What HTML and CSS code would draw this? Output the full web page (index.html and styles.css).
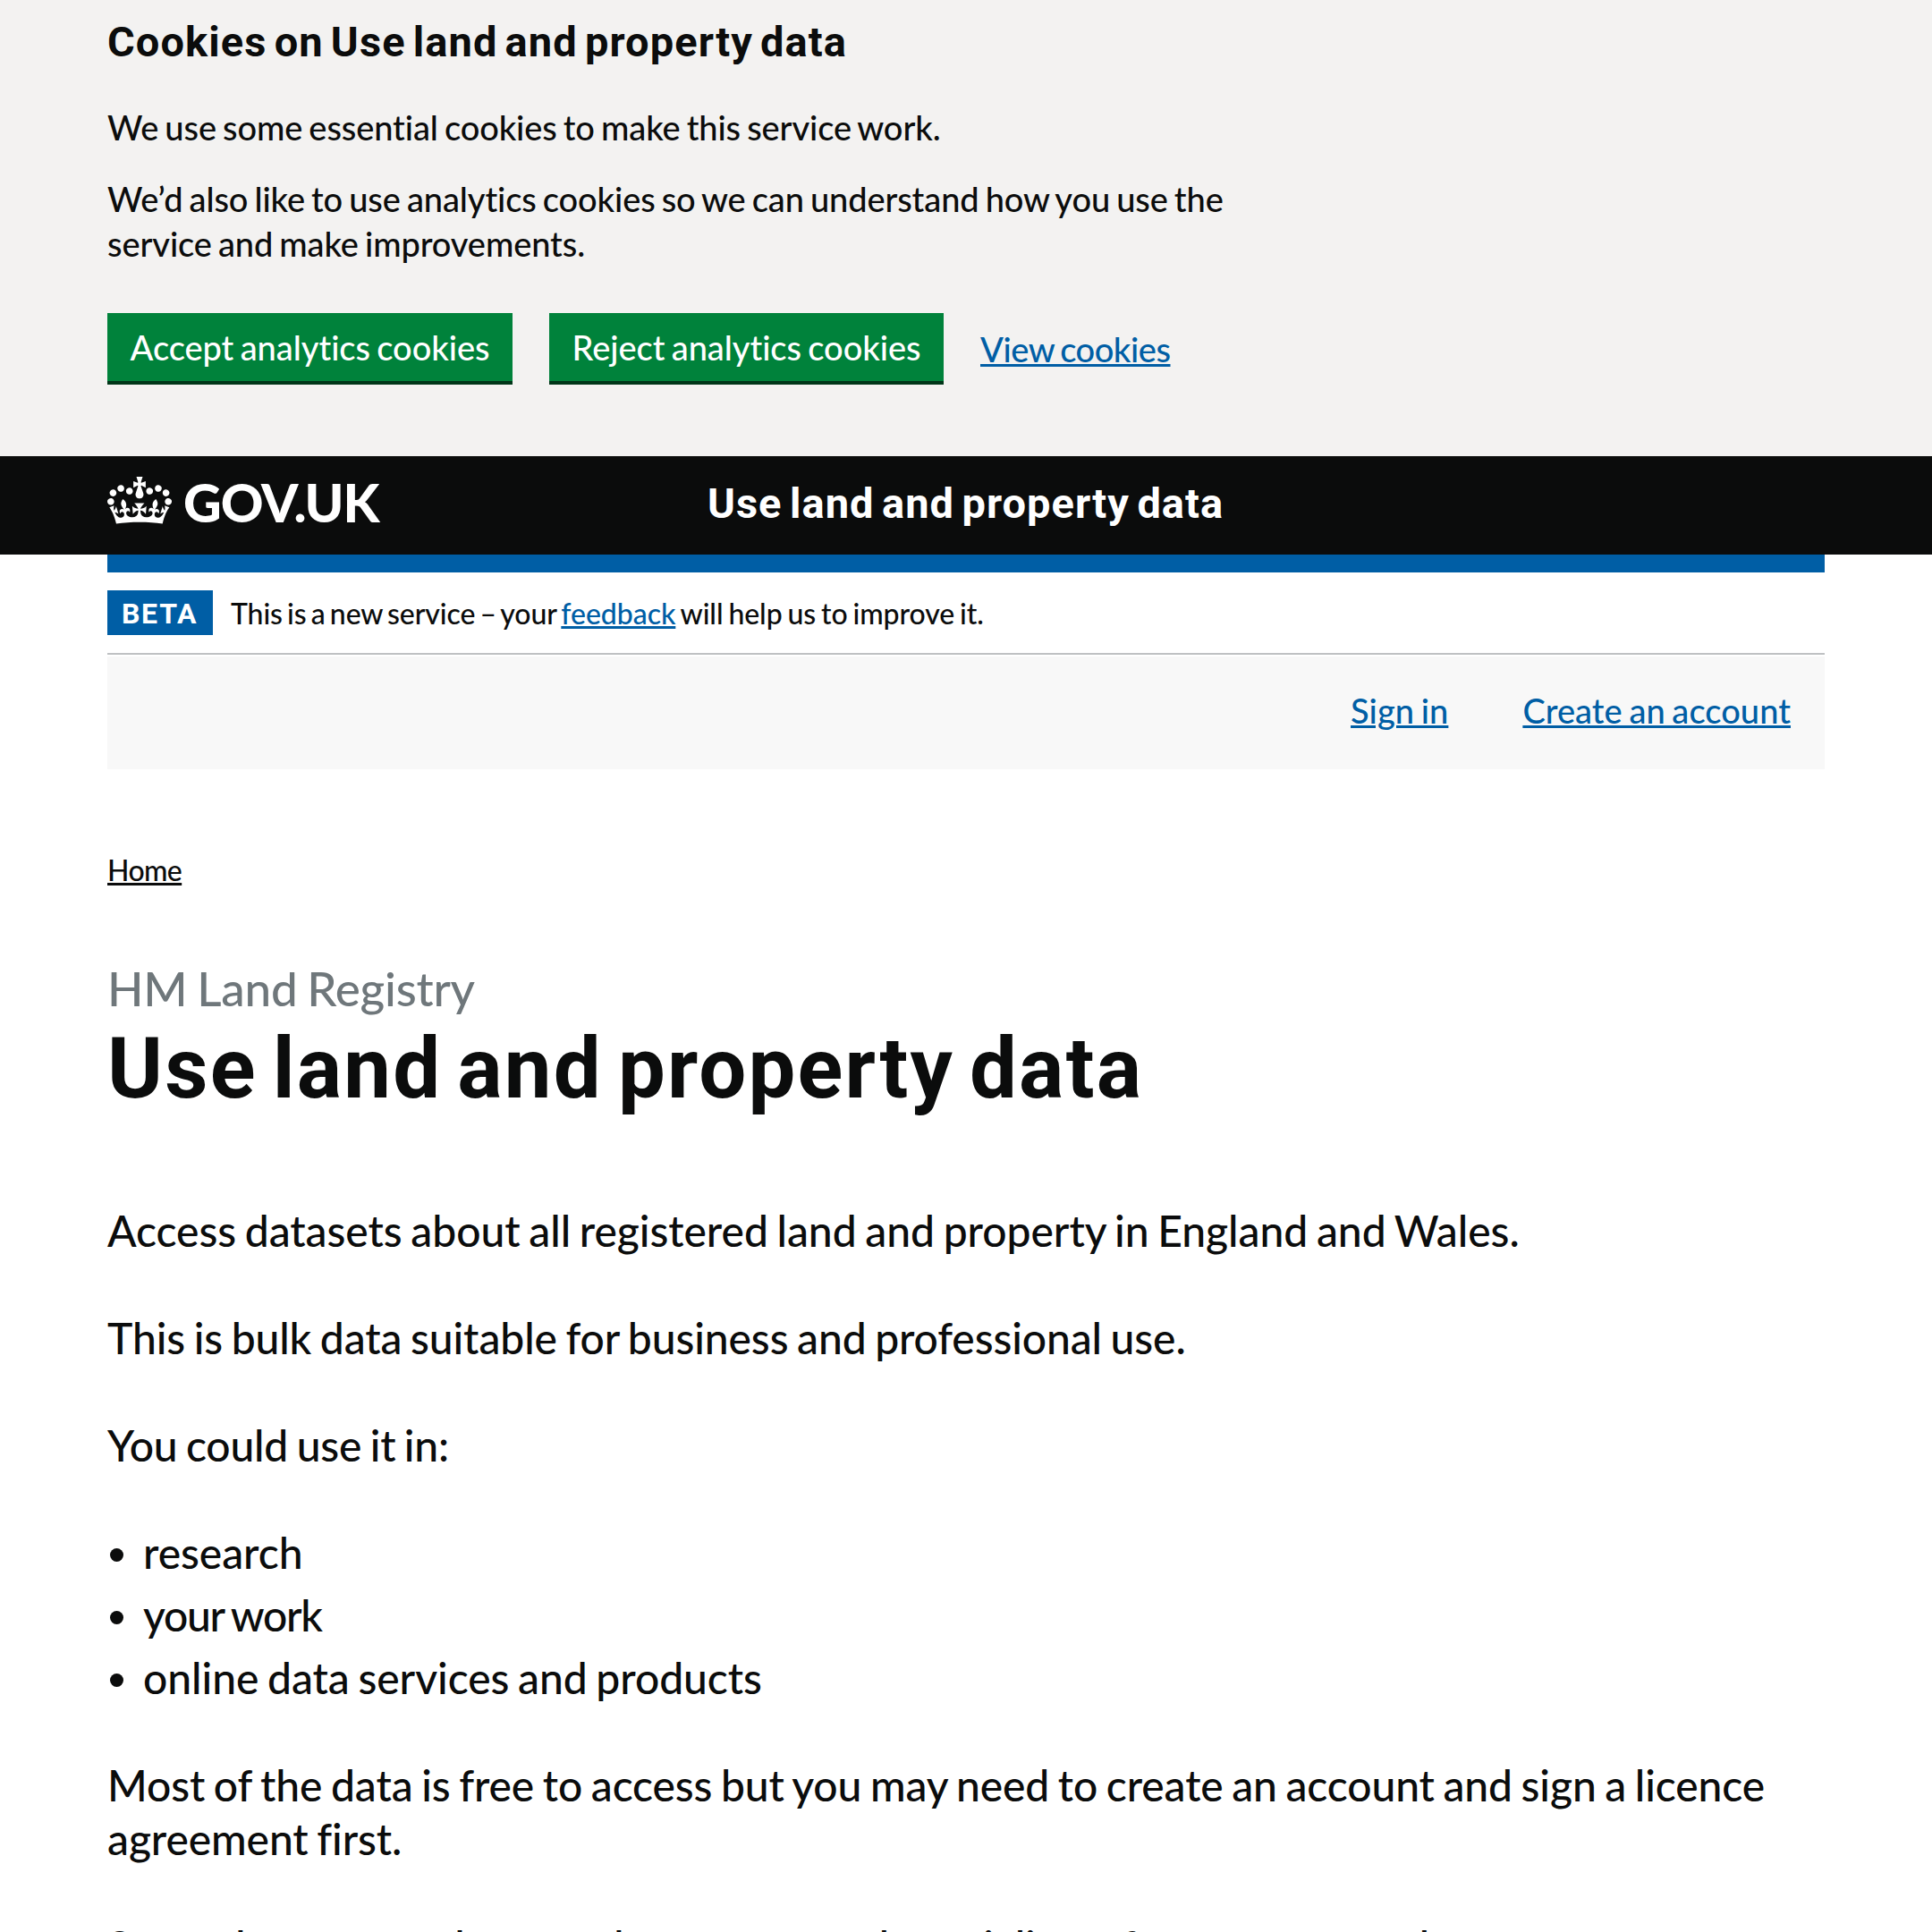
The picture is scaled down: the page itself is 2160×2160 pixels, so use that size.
FILE: index.html
```html
<!DOCTYPE html>
<html lang="en">
<head>
<meta charset="utf-8">
<title>Use land and property data</title>
<link rel="stylesheet" href="styles.css">
</head>
<body>
<section class="cookies" aria-label="Cookies on Use land and property data">
  <div class="container">
    <h2 class="cookies-title">Cookies on Use land and property data</h2>
    <div class="cookies-text">
      <p>We use some essential cookies to make this service work.</p>
      <p>We’d also like to use analytics cookies so we can understand how you use the<br>service and make improvements.</p>
    </div>
    <div class="cookies-actions">
      <button class="button button-accept">Accept analytics cookies</button>
      <button class="button button-reject">Reject analytics cookies</button>
      <a class="link link-view" href="#">View cookies</a>
    </div>
  </div>
</section>
<header class="header">
  <div class="container header-row">
    <a class="logo" href="#">
      <svg class="crown" viewBox="0 0 132 97" width="72" height="53" fill="currentColor" aria-hidden="true"><path fill-rule="evenodd" d="M25 30.2c3.5 1.5 7.7-.2 9.1-3.7 1.5-3.6-.2-7.8-3.9-9.2-3.6-1.4-7.6.3-9.1 3.9-1.4 3.5.3 7.5 3.9 9zM9 39.5c3.6 1.5 7.8-.2 9.2-3.7 1.5-3.6-.2-7.8-3.9-9.1-3.6-1.5-7.6.2-9.1 3.8-1.4 3.5.3 7.5 3.8 9zM4.4 57.2c3.5 1.5 7.7-.2 9.1-3.8 1.5-3.6-.2-7.7-3.9-9.1-3.5-1.5-7.6.3-9.1 3.8-1.4 3.5.3 7.6 3.9 9.1zm38.3-21.4c3.5 1.5 7.7-.2 9.1-3.8 1.5-3.6-.2-7.7-3.9-9.1-3.6-1.5-7.6.3-9.1 3.8-1.3 3.6.4 7.7 3.9 9.1zm64.4-5.6c-3.6 1.5-7.8-.2-9.1-3.7-1.5-3.6.2-7.8 3.8-9.2 3.6-1.4 7.7.3 9.2 3.9 1.3 3.5-.4 7.5-3.9 9zm15.9 9.3c-3.6 1.5-7.7-.2-9.1-3.7-1.5-3.6.2-7.8 3.7-9.1 3.6-1.5 7.7.2 9.2 3.8 1.5 3.5-.3 7.5-3.8 9zm4.7 17.7c-3.6 1.5-7.8-.2-9.2-3.8-1.5-3.6.2-7.7 3.9-9.1 3.6-1.5 7.7.3 9.2 3.8 1.3 3.5-.4 7.6-3.9 9.1zM89.3 35.8c-3.6 1.5-7.8-.2-9.2-3.8-1.4-3.6.2-7.7 3.9-9.1 3.6-1.5 7.7.3 9.2 3.8 1.4 3.6-.3 7.7-3.9 9.1zM69.7 17.7l8.9 4.7V9.3l-8.9 2.8c-.2-.3-.5-.6-.9-.9L72.4 0H59.6l3.5 11.2c-.3.3-.6.5-.9.9l-8.8-2.8v13.1l8.8-4.7c.3.3.6.7.9.9l-5 15.4v.1c-.2.8-.4 1.6-.4 2.4 0 4.1 3.1 7.5 7 8.1h.2c.3 0 .7.1 1 .1.4 0 .7 0 1-.1h.2c4-.6 7.1-4.1 7.1-8.1 0-.8-.1-1.7-.4-2.4V34l-5.1-15.4c.4-.2.7-.6 1-.9zM66 92.8c16.9 0 32.8 1.1 47.1 3.2 4-16.9 8.9-26.7 14-33.5l-9.6-3.4c1 4.9 1.1 7.2 0 10.2-1.5-1.4-3-4.3-4.2-8.7L108.6 76c2.8-2 5-3.2 7.5-3.3-4.4 9.4-10 11.9-13.6 11.2-4.3-.8-6.3-4.6-5.6-7.9 1-4.7 5.7-5.9 8-.5 4.3-8.7-3-11.4-7.6-8.8 7.1-7.2 7.9-13.5 2.1-21.1-8 6.1-8.1 12.3-4.5 20.8-4.7-5.4-12.1-2.5-9.5 6.2 3.4-5.2 7.9-2 7.2 3.1-.6 4.3-6.4 7.8-13.5 7.2-10.3-.9-10.9-8-11.2-13.8 2.5-.5 7.1 1.8 11 7.3L80.2 60c-4.1 4.4-8 5.3-12.3 5.4 1.4-4.4 8-11.6 8-11.6H55.5s6.4 7.2 7.9 11.6c-4.2-.1-8-1-12.3-5.4l1.4 16.4c3.9-5.5 8.5-7.7 10.9-7.3-.3 5.8-.9 12.8-11.1 13.8-7.2.6-12.9-2.9-13.5-7.2-.7-5 3.8-8.3 7.1-3.1 2.7-8.7-4.6-11.6-9.4-6.2 3.7-8.5 3.6-14.7-4.6-20.8-5.8 7.6-5 13.9 2.2 21.1-4.7-2.6-11.9.1-7.7 8.8 2.3-5.5 7.1-4.2 8.1.5.7 3.3-1.3 7.1-5.7 7.9-3.5.7-9-1.8-13.5-11.2 2.5.1 4.7 1.3 7.5 3.3l-4.7-15.4c-1.2 4.4-2.7 7.2-4.3 8.7-1.1-3-.9-5.3 0-10.2l-9.5 3.4c5 6.9 9.9 16.7 14 33.5 14.8-2.1 30.8-3.2 47.7-3.2z"/></svg>
      <span class="logo-text">GOV.UK</span>
    </a>
    <a class="service-name" href="#">Use land and property data</a>
  </div>
</header>
<div class="container">
  <div class="blue-bar"></div>
  <div class="phase">
    <strong class="tag">BETA</strong>
    <p class="phase-text">This is a new service – your <a class="link link-feedback" href="#">feedback</a> <span class="phase-end">will help us to improve it.</span></p>
  </div>
  <nav class="account">
    <a class="link" href="#">Sign in</a>
    <a class="link" href="#">Create an account</a>
  </nav>
  <nav class="breadcrumbs"><a class="link link-home" href="#">Home</a></nav>
  <main>
    <div class="caption">HM Land Registry</div>
    <h1 class="title">Use land and property data</h1>
    <div class="body">
      <p class="lead">Access datasets about all registered land and property in England and Wales.</p>
      <p>This is bulk data suitable for business and professional use.</p>
      <p class="intro">You could use it in:</p>
      <ul class="list">
        <li>research</li>
        <li><span class="work">your work</span></li>
        <li>online data services and products</li>
      </ul>
      <p>Most of the data is free to access but you may need to create an account and sign a licence<br>agreement first.</p>
      <p>Some datasets are large and you may need specialist software to open them.</p>
    </div>
  </main>
</div>
</body>
</html>
```
FILE: styles.css
```css
* { box-sizing: border-box; }

html { overflow: hidden; }

body {
  margin: 0;
  height: 2160px;
  overflow: hidden;
  background: #fff;
  color: #0b0c0c;
  font: 500 38px/50px Lato, "Noto Sans", sans-serif;
  letter-spacing: -.1px;
  word-spacing: -2.4px;
}

p, h1, h2, ul { margin: 0; padding: 0; }

.container { width: 1920px; margin: 0 auto; }

.link {
  color: #005ea5;
  text-decoration: underline;
  text-decoration-thickness: 3px;
  text-underline-offset: 2px;
}

/* Cookie banner */
.cookies { height: 510px; padding-top: 17px; background: #f3f2f1; }

.cookies-title {
  font: 700 47px/60px Roboto, sans-serif;
  letter-spacing: 1.1px;
  word-spacing: -4.7px;
}

.cookies-text {
  display: flex;
  flex-direction: column;
  gap: 30px;
  margin-top: 40px;
}

.cookies-actions { display: flex; margin-top: 53px; }

.button {
  height: 76px;
  margin: 0 41px 0 0;
  padding: 13px 0;
  border: 0;
  background: #00823b;
  box-shadow: 0 4px 0 #003618;
  color: #fff;
  font: inherit;
  font-variant-ligatures: none;
  letter-spacing: -.05px;
  word-spacing: -2.2px;
  text-align: center;
}

.button-accept { width: 453px; }
.button-reject { width: 441px; }

.link-view {
  margin-top: 15px;
  letter-spacing: -.45px;
  word-spacing: -2.5px;
}

/* Header */
.header { height: 110px; background: #0b0c0c; color: #fff; }

.header-row { display: flex; }

.logo {
  display: flex;
  width: 671px;
  color: inherit;
  text-decoration: none;
}

.crown { margin: 23px 13px 0 0; }

.logo-text {
  margin-top: 22px;
  font: 900 59px/60px Lato, sans-serif;
  letter-spacing: -1px;
}

.service-name {
  margin-top: 23px;
  color: inherit;
  font: 700 47px/60px Roboto, sans-serif;
  letter-spacing: 1px;
  word-spacing: -4.1px;
  text-decoration: none;
}

/* Phase banner */
.blue-bar { height: 20px; background: #005ea5; }

.phase {
  display: flex;
  height: 92px;
  padding: 20px 0;
  border-bottom: 2px solid #bfc1c3;
  font-size: 32px;
  line-height: 52px;
  letter-spacing: -.1px;
  word-spacing: -2.8px;
}

.tag {
  width: 118px;
  height: 50px;
  margin-right: 20px;
  padding: 1px 0 0 16px;
  background: #005ea5;
  color: #fff;
  font: 700 32px/50px Roboto, sans-serif;
  letter-spacing: 1.7px;
}

.link-feedback { letter-spacing: -.05px; }

.phase-end { word-spacing: -2px; }

/* Account links */
.account {
  display: flex;
  justify-content: flex-end;
  gap: 83px;
  height: 126px;
  margin-top: 2px;
  padding: 35px 38px 0 0;
  background: #f8f8f8;
  letter-spacing: .05px;
  word-spacing: -2px;
}

.breadcrumbs {
  margin-top: 88px;
  font-size: 32px;
  letter-spacing: -.6px;
}

.link-home { color: inherit; }

/* Page content */
.caption {
  margin-top: 77px;
  color: #6f777b;
  font-size: 53px;
  line-height: 60px;
  letter-spacing: -.25px;
  word-spacing: -2.3px;
}

.title {
  margin-top: 10px;
  font: 700 94px/100px Roboto, sans-serif;
  letter-spacing: 2.2px;
  word-spacing: -8.5px;
}

.body {
  display: flex;
  flex-direction: column;
  gap: 60px;
  margin-top: 101px;
  font-size: 48px;
  line-height: 60px;
  letter-spacing: -.1px;
  word-spacing: -2.4px;
}

.lead { letter-spacing: -.04px; }

.intro { letter-spacing: -.2px; }

.list {
  display: flex;
  flex-direction: column;
  gap: 10px;
  list-style: none;
  letter-spacing: -.05px;
}

.list li { display: flex; }

.list li::before {
  content: "";
  width: 15px;
  height: 15px;
  margin: 25px 22px 0 3px;
  border-radius: 50%;
  background: currentColor;
}

.work { letter-spacing: -1.3px; word-spacing: -1.9px; }
```
